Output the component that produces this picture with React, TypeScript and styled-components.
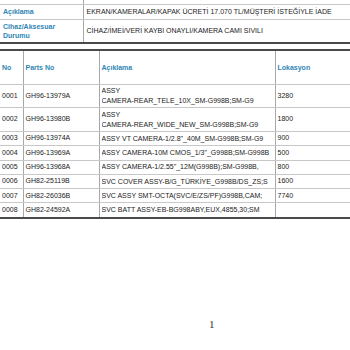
import { FC } from "react";
import styled, { createGlobalStyle } from "styled-components";

const COLORS = {
    label: "#2f86b4",
    text: "#222222",
    line: "#c8c8c8",
    divider: "#a8a8a8",
    thick: "#4a4a4a",
};

const GlobalStyle = createGlobalStyle`
    html, body {
        margin: 0;
        padding: 0;
        background: #ffffff;
        font-family: "Liberation Sans", Arial, sans-serif;
    }
`;

interface Part {
    no: string;
    partNo: string;
    desc: string[];
    location: string;
}

const PARTS: Part[] = [
    { no: "0001", partNo: "GH96-13979A", desc: ["ASSY", "CAMERA-REAR_TELE_10X_SM-G998B;SM-G9"], location: "3280" },
    { no: "0002", partNo: "GH96-13980B", desc: ["ASSY", "CAMERA-REAR_WIDE_NEW_SM-G998B;SM-G9"], location: "1800" },
    { no: "0003", partNo: "GH96-13974A", desc: ["ASSY VT CAMERA-1/2.8\"_40M_SM-G998B;SM-G9"], location: "900" },
    { no: "0004", partNo: "GH96-13969A", desc: ["ASSY CAMERA-10M CMOS_1/3\"_G998B;SM-G998B"], location: "500" },
    { no: "0005", partNo: "GH96-13968A", desc: ["ASSY CAMERA-1/2.55\"_12M(G998B);SM-G998B,"], location: "800" },
    { no: "0006", partNo: "GH82-25119B", desc: ["SVC COVER ASSY-B/G_TÜRKİYE_G998B/DS_ZS;S"], location: "1600" },
    { no: "0007", partNo: "GH82-26036B", desc: ["SVC ASSY SMT-OCTA(SVC/E/ZS/PF)G998B,CAM;"], location: "7740" },
    { no: "0008", partNo: "GH82-24592A", desc: ["SVC BATT ASSY-EB-BG998ABY,EUX,4855,30;SM"], location: "" },
];

export default function App() {
    return (
        <Page>
            <GlobalStyle />
            <InfoTable>
                <colgroup>
                    <col style={{ width: 83 }} />
                    <col />
                </colgroup>
                <tbody>
                    <CutRow>
                        <InfoLabel />
                        <InfoValue />
                    </CutRow>
                    <tr>
                        <InfoLabel>Açıklama</InfoLabel>
                        <InfoValue>EKRAN/KAMERALAR/KAPAK ÜCRETİ 17.070 TL/MÜŞTERİ İSTEĞİYLE İADE</InfoValue>
                    </tr>
                    <LastRow>
                        <InfoLabel>
                            Cihaz/Aksesuar
                            <br />
                            Durumu
                        </InfoLabel>
                        <InfoValue>CİHAZ/İMEİ/VERİ KAYBI ONAYLI/KAMERA CAMI SIVILI</InfoValue>
                    </LastRow>
                </tbody>
            </InfoTable>

            <PartsTable>
                <colgroup>
                    <col style={{ width: 23 }} />
                    <col style={{ width: 76 }} />
                    <col style={{ width: 176 }} />
                    <col />
                </colgroup>
                <thead>
                    <tr>
                        <HeadCell>No</HeadCell>
                        <HeadCell>Parts No</HeadCell>
                        <HeadCell>Açıklama</HeadCell>
                        <HeadCell>Lokasyon</HeadCell>
                    </tr>
                </thead>
                <tbody>
                    {PARTS.map((p) => (
                        <PartRow key={p.no} part={p} />
                    ))}
                </tbody>
            </PartsTable>

            <PageNumber>1</PageNumber>
        </Page>
    );
}

const PartRow: FC<{ part: Part }> = ({ part }) => (
    <BodyRow>
        <Cell>{part.no}</Cell>
        <Cell>{part.partNo}</Cell>
        <Cell>
            {part.desc.map((line, i) => (
                <DescLine key={i}>{line}</DescLine>
            ))}
        </Cell>
        <Cell>{part.location}</Cell>
    </BodyRow>
);

const Page = styled.div`
    width: 350px;
    height: 350px;
    overflow: hidden;
    display: flex;
    flex-direction: column;
    color: ${COLORS.text};
`;

const InfoTable = styled.table`
    width: 100%;
    table-layout: fixed;
    border-collapse: collapse;
    border-bottom: 2px solid ${COLORS.thick};
    font-size: 7px;
`;

const CutRow = styled.tr`
    height: 4px;
    td {
        padding: 0;
        height: 3px;
    }
`;

const LastRow = styled.tr`
    td {
        border-bottom: none;
    }
`;

const InfoLabel = styled.td`
    padding: 1px 3px;
    height: 12px;
    line-height: 9px;
    color: ${COLORS.label};
    font-weight: bold;
    border-right: 1px solid ${COLORS.divider};
    border-bottom: 1px solid ${COLORS.line};
    vertical-align: middle;
    ${LastRow} & {
        padding: 2px 3px;
    }
`;

const InfoValue = styled.td`
    padding: 1px 3px;
    line-height: 9px;
    white-space: nowrap;
    overflow: hidden;
    border-bottom: 1px solid ${COLORS.line};
    vertical-align: middle;
`;

const PartsTable = styled.table`
    margin-top: 5px;
    width: 100%;
    table-layout: fixed;
    border-collapse: collapse;
    border-top: 2px solid ${COLORS.thick};
    border-bottom: 2px solid ${COLORS.thick};
    font-size: 7px;
`;

const HeadCell = styled.th`
    height: 33px;
    padding: 0 2px;
    text-align: left;
    vertical-align: middle;
    font-weight: bold;
    color: ${COLORS.label};
    border-right: 1px solid ${COLORS.divider};
    border-bottom: 1px solid ${COLORS.line};
    &:last-child {
        border-right: none;
    }
`;

const BodyRow = styled.tr`
    &:last-child td {
        border-bottom: none;
    }
`;

const Cell = styled.td`
    padding: 1.4px 2px;
    line-height: 10.5px;
    vertical-align: middle;
    white-space: nowrap;
    overflow: hidden;
    border-right: 1px solid ${COLORS.divider};
    border-bottom: 1px solid ${COLORS.line};
    &:last-child {
        border-right: none;
    }
`;

const DescLine = styled.div`
    line-height: 10px;
    white-space: nowrap;
    overflow: hidden;
`;

const PageNumber = styled.div`
    margin-top: 99px;
    padding-left: 209px;
    font-family: "Liberation Serif", "Times New Roman", serif;
    font-size: 11px;
    color: #333333;
`;
